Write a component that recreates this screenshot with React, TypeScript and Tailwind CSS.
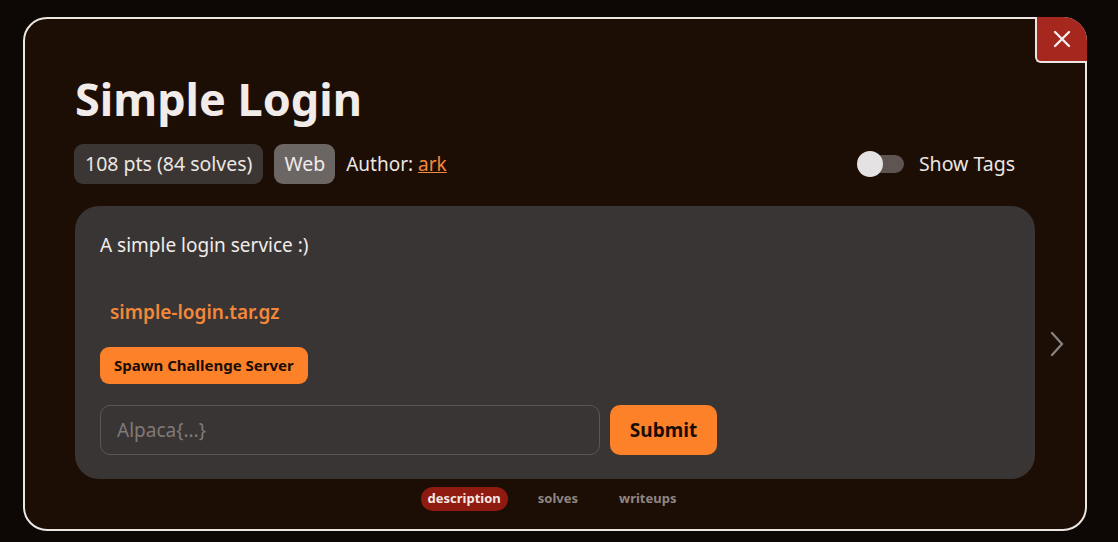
import { useState } from "react";

const App = () => {
    const [flag, setFlag] = useState("");

    return (
        <div className="w-[1118px] h-[542px] bg-[#0d0705] pt-[17px] pl-[23px] overflow-hidden" style={{ fontFamily: '"Noto Sans", sans-serif' }}>
            <div className="w-[1064px] h-[514px] bg-[#1d0e05] border-2 border-[#ece6e2] rounded-[24px] relative flex flex-col">
                <button className="absolute -top-[2px] -right-[2px] w-[52px] h-[46px] bg-[#a5271d] rounded-tr-[24px] rounded-bl-[6px] border-l-2 border-b-2 border-[#ece6e2] flex items-center justify-center">
                    <svg width="20" height="20" viewBox="0 0 20 20" stroke="#f3eeee" strokeWidth="2.4" strokeLinecap="round">
                        <path d="M3 3 L17 17 M17 3 L3 17" />
                    </svg>
                </button>

                <div className="pl-[50px] pr-[50px] pt-[54px]">
                    <h1 className="text-[45px] leading-[52px] font-bold text-[#f1ecea]">Simple Login</h1>

                    <div className="flex items-center mt-[19px] h-[40px]">
                        <span className="bg-[#3b3634] text-[#ece6e2] text-[19.5px] rounded-[9px] px-[11px] h-[40px] flex items-center -ml-[1px]">108 pts (84 solves)</span>
                        <span className="bg-[#6b6564] text-[#f1ecea] text-[19.5px] rounded-[9px] px-[10px] h-[40px] flex items-center ml-[11px]">Web</span>
                        <span className="text-[#ece6e2] text-[19px] ml-[11px]">Author: <a className="text-[#f3893a] underline">ark</a></span>
                        <div className="ml-auto flex items-center mr-[20px]">
                            <div className="relative w-[46px] h-[18px] rounded-full bg-[#5e5452]">
                                <div className="absolute -left-[1px] -top-[4px] w-[26px] h-[26px] rounded-full bg-[#e4e2e2]" />
                            </div>
                            <span className="text-[#ece6e2] text-[19.5px] ml-[15px]">Show Tags</span>
                        </div>
                    </div>

                    <div className="relative">
                        <div className="mt-[22px] bg-[#393534] rounded-[24px] h-[273px] px-[25px] pt-[25px]">
                            <p className="text-[#f1ecea] text-[19px] leading-[28px]">A simple login service :)</p>
                            <a className="block text-[#f4883a] text-[19px] font-semibold ml-[10px] mt-[39px] leading-[28px]">simple-login.tar.gz</a>
                            <button className="mt-[21px] bg-[#fd8128] text-[#1a0d06] text-[15px] font-bold rounded-[9px] h-[37px] px-[14px]">Spawn Challenge Server</button>
                            <div className="flex items-center mt-[21px] gap-[10px]">
                                <input
                                    className="w-[500px] h-[50px] bg-transparent border border-[#5b5655] rounded-[10px] px-[16px] text-[19px] text-[#ece6e2] placeholder:text-[#807a78] outline-none"
                                    placeholder="Alpaca{...}"
                                    value={flag}
                                    onChange={(e) => setFlag(e.target.value)}
                                />
                                <button className="bg-[#fd8128] text-[#1a0d06] text-[19px] font-bold rounded-[10px] h-[50px] w-[107px]">Submit</button>
                            </div>
                        </div>
                        <svg className="absolute -right-[29px] top-[125px]" width="14" height="26" viewBox="0 0 14 26" fill="none" stroke="#8a8584" strokeWidth="2.2" strokeLinecap="round">
                            <path d="M2 2 L12 13 L2 24" />
                        </svg>
                    </div>

                    <div className="flex justify-center items-center mt-[8px] mr-[13px] text-[13px] font-bold">
                        <span className="bg-[#8f1b10] text-[#f3e9e4] rounded-full px-[7px] h-[24px] flex items-center">description</span>
                        <span className="text-[#8e8683] ml-[30px]">solves</span>
                        <span className="text-[#8e8683] ml-[41px]">writeups</span>
                    </div>
                </div>
            </div>
        </div>
    );
};

export default App;
